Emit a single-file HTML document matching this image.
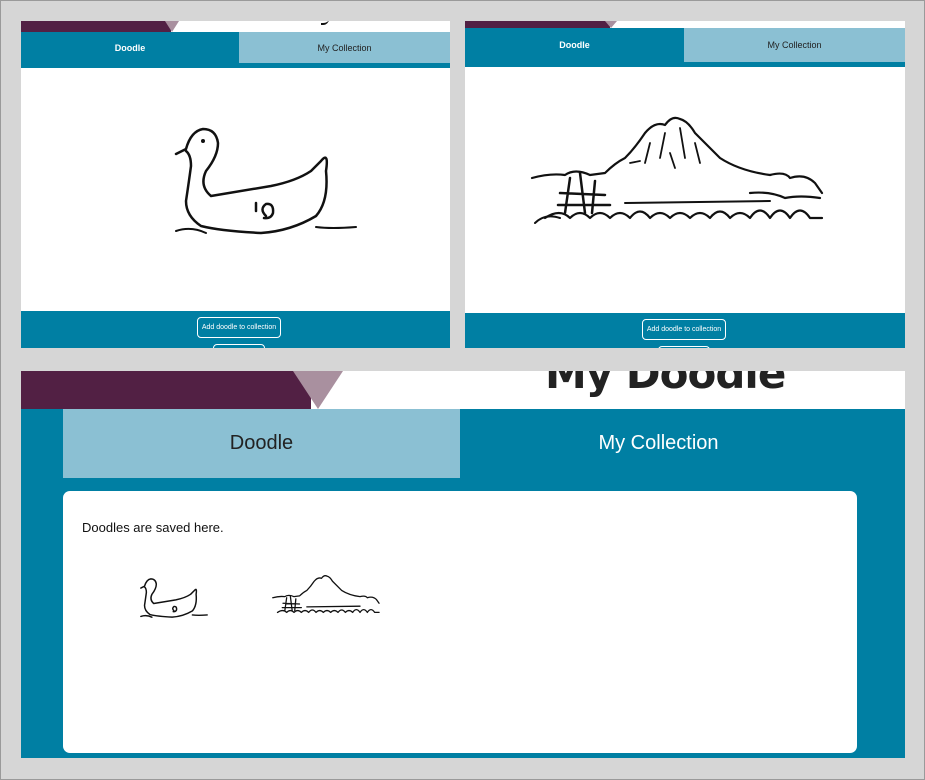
<!DOCTYPE html>
<html><head><style>
body{margin:0;width:925px;height:780px;background:#d6d6d6;position:relative;overflow:hidden;font-family:"Liberation Sans",sans-serif;}
.frame{position:absolute;left:0;top:0;width:923px;height:778px;border:1px solid #9a9a9a;}
.abs{position:absolute;}
.teal{background:#007fa3;}
.lb{background:#8bc0d3;}
.pur{background:#522044;}
.btn{position:absolute;border:1.5px solid #fff;border-radius:4px;color:#fff;font-size:7px;display:flex;align-items:center;justify-content:center;box-sizing:border-box;}
.tab{position:absolute;display:flex;align-items:center;justify-content:center;}
svg path{fill:none;stroke:#111;stroke-linecap:round;stroke-linejoin:round;}
</style></head><body>
<div class="frame"></div>

<div class="abs" style="left:21px;top:21px;width:429px;height:327px;background:#fff;overflow:hidden">
  <div class="abs pur" style="left:0;top:0;width:150px;height:11px"></div>
  <div class="abs" style="left:144px;top:0;width:0;height:0;border-left:7px solid transparent;border-right:7px solid transparent;border-top:11px solid #a9909f"></div>
  <div class="abs" style="left:300px;top:-6px;width:8px;height:8px;border-bottom:2.5px solid #111;border-radius:0 0 6px 0"></div>
  <div class="abs teal" style="left:0;top:11px;width:429px;height:36px"></div>
  <div class="tab" style="left:0;top:11px;width:218px;height:31px;color:#fff;font-size:9px;font-weight:bold">Doodle</div>
  <div class="tab lb" style="left:218px;top:11px;width:211px;height:31px;color:#222;font-size:9px">My Collection</div>
  <svg class="abs" style="left:150px;top:100px" width="190" height="120" viewBox="0 0 190 120">
    <path stroke-width="2.5" d="M5 33 L15 28 Q20 10 32 8 Q45 8 47 22 Q47 35 35 50 Q28 65 40 75 Q70 70 100 65 Q125 60 140 50 L150 40 Q158 30 155 50 Q158 80 145 95 Q120 110 90 112 Q50 110 30 105 Q15 95 15 80 Q18 60 20 45 Q20 34 15 30"/>
    <path stroke-width="2.5" d="M95 95 Q88 88 95 83 Q103 82 102 92 Q100 98 93 97 M85 90 L85 82"/>
    <path stroke-width="2" d="M5 110 Q20 105 35 112 M145 106 Q160 108 185 106"/>
    <circle cx="32" cy="20" r="2" fill="#111"/>
  </svg>
  <div class="abs teal" style="left:0;top:290px;width:429px;height:37px"></div>
  <div class="btn" style="left:176px;top:296px;width:84px;height:21px">Add doodle to collection</div>
  <div class="btn" style="left:192px;top:323px;width:52px;height:12px"></div>
</div>

<div class="abs" style="left:465px;top:21px;width:440px;height:327px;background:#fff;overflow:hidden">
  <div class="abs pur" style="left:0;top:0;width:145px;height:7px"></div>
  <div class="abs" style="left:140px;top:0;width:0;height:0;border-left:6px solid transparent;border-right:6px solid transparent;border-top:7px solid #a9909f"></div>
  <div class="abs teal" style="left:0;top:7px;width:440px;height:39px"></div>
  <div class="tab" style="left:0;top:7px;width:219px;height:34px;color:#fff;font-size:9px;font-weight:bold">Doodle</div>
  <div class="tab lb" style="left:219px;top:7px;width:221px;height:34px;color:#222;font-size:9px">My Collection</div>
  <svg class="abs" style="left:65px;top:92px" width="300" height="115" viewBox="0 0 300 115">
    <path stroke-width="2.2" d="M2 65 Q20 60 35 62 Q45 55 60 62 L75 60 Q85 50 95 45 Q105 35 115 20 Q125 8 135 12 Q142 2 150 6 Q158 8 165 20 Q180 35 190 45 Q210 58 240 62 Q255 58 260 65 Q275 60 285 70 L292 80 M220 80 Q240 78 255 85 Q270 82 290 85"/>
    <path stroke-width="1.8" d="M120 30 L115 50 M135 20 L130 45 M150 15 L155 45 M165 30 L170 50 M100 50 L110 48 M140 40 L145 55"/>
    <path stroke-width="2.5" d="M40 65 L35 100 M50 60 L55 100 M65 68 L62 100 M30 80 L75 82 M28 92 L80 92"/>
    <path stroke-width="2.2" d="M15 105 Q30 95 40 105 Q50 95 60 105 Q70 95 80 105 Q90 95 100 105 Q110 92 120 105 Q130 95 140 105 Q150 95 160 105 Q170 95 180 105 Q190 92 200 105 Q210 95 220 105 Q230 90 240 105 Q250 90 260 105 Q270 90 280 105 L292 105"/>
    <path stroke-width="2" d="M5 110 Q15 100 30 105 M95 90 L240 88"/>
  </svg>
  <div class="abs teal" style="left:0;top:292px;width:440px;height:35px"></div>
  <div class="btn" style="left:177px;top:298px;width:84px;height:21px">Add doodle to collection</div>
  <div class="btn" style="left:193px;top:325px;width:52px;height:12px"></div>
</div>

<div class="abs teal" style="left:21px;top:371px;width:884px;height:387px;overflow:hidden">
  <div class="abs" style="left:0;top:0;width:884px;height:38px;background:#fff"></div>
  <div class="abs pur" style="left:0;top:0;width:290px;height:38px"></div>
  <div class="abs" style="left:272px;top:0;width:0;height:0;border-left:25px solid transparent;border-right:25px solid transparent;border-top:38px solid #a9909f"></div>
  <div class="abs" style="left:524px;top:-22px;font-size:42px;font-weight:bold;color:#222;font-family:'DejaVu Sans',sans-serif;letter-spacing:-1px;line-height:50px">My Doodle</div>
  <div class="tab lb" style="left:42px;top:38px;width:397px;height:69px;font-size:20px;color:#222">Doodle</div>
  <div class="tab" style="left:439px;top:38px;width:397px;height:69px;font-size:20px;color:#fff">My Collection</div>
  <div class="abs" style="left:42px;top:120px;width:794px;height:262px;background:#fff;border-radius:7px">
    <div class="abs" style="left:19px;top:29px;font-size:13px;color:#111">Doodles are saved here.</div>
    <svg class="abs" style="left:76px;top:84px" width="70" height="46" viewBox="0 0 190 120">
      <path stroke-width="4" d="M5 33 L15 28 Q20 10 32 8 Q45 8 47 22 Q47 35 35 50 Q28 65 40 75 Q70 70 100 65 Q125 60 140 50 L150 40 Q158 30 155 50 Q158 80 145 95 Q120 110 90 112 Q50 110 30 105 Q15 95 15 80 Q18 60 20 45 Q20 34 15 30 M95 95 Q88 88 95 83 Q103 82 102 92 Q100 98 93 97 M5 110 Q20 105 35 112 M145 106 Q160 108 185 106"/>
    </svg>
    <svg class="abs" style="left:209px;top:82px" width="110" height="44" viewBox="0 0 300 115">
      <path stroke-width="3.5" d="M2 65 Q20 60 35 62 Q45 55 60 62 L75 60 Q85 50 95 45 Q105 35 115 20 Q125 8 135 12 Q142 2 150 6 Q158 8 165 20 Q180 35 190 45 Q210 58 240 62 Q255 58 260 65 Q275 60 285 70 L292 80 M40 65 L35 100 M50 60 L55 100 M65 68 L62 100 M30 80 L75 82 M28 92 L80 92 M15 105 Q30 95 40 105 Q50 95 60 105 Q70 95 80 105 Q90 95 100 105 Q110 92 120 105 Q130 95 140 105 Q150 95 160 105 Q170 95 180 105 Q190 92 200 105 Q210 95 220 105 Q230 90 240 105 Q250 90 260 105 Q270 90 280 105 L292 105 M95 90 L240 88"/>
    </svg>
  </div>
</div>
</body></html>
